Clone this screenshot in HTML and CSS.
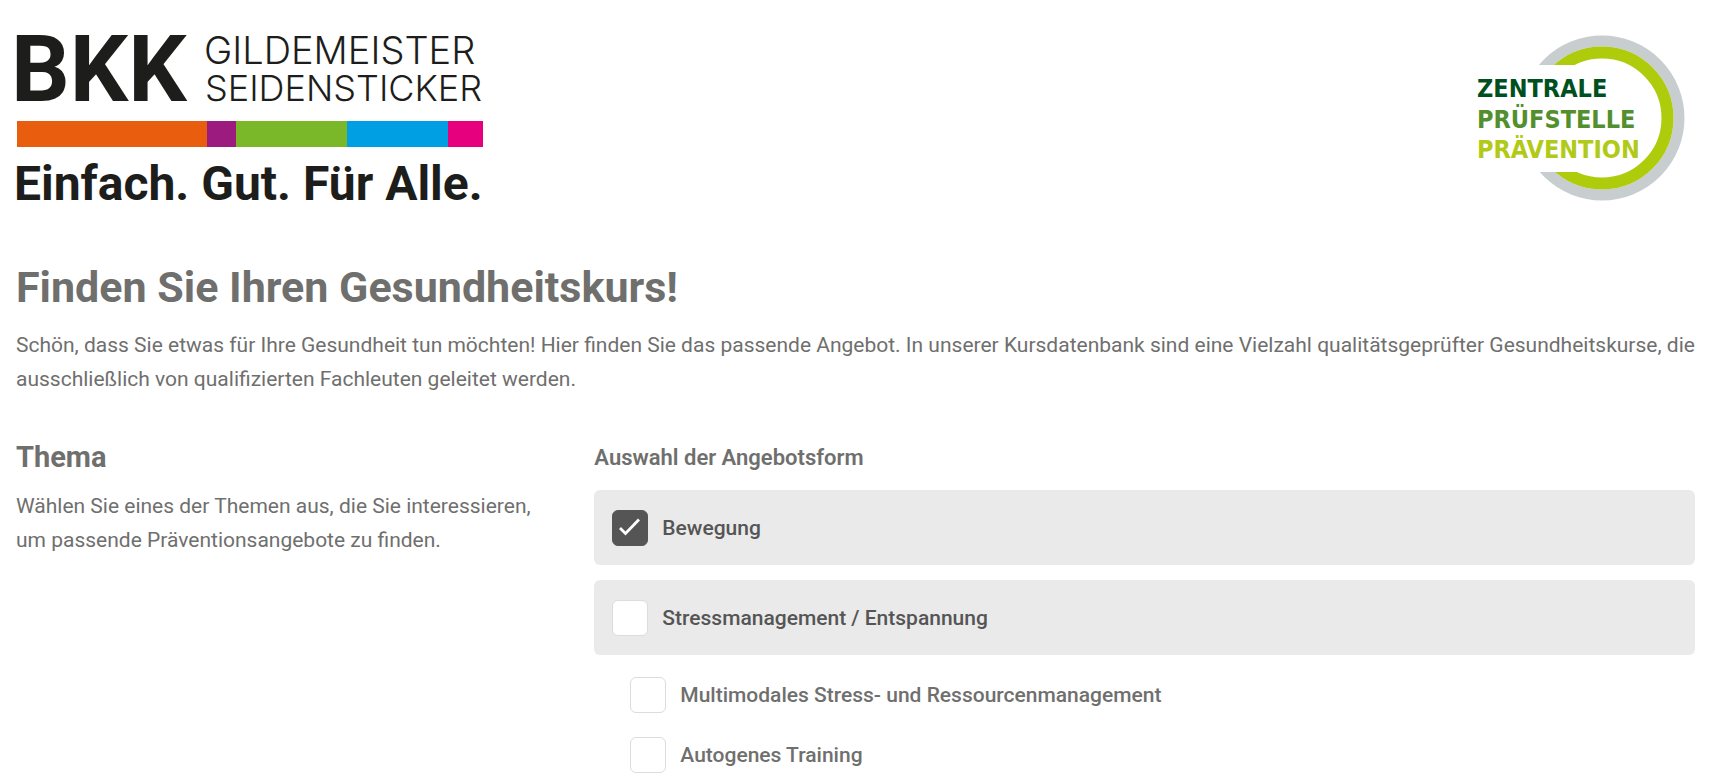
FILE: index.html
```html
<!DOCTYPE html>
<html lang="de">
<head>
<meta charset="utf-8">
<meta name="viewport" content="width=device-width, initial-scale=1">
<title>Finden Sie Ihren Gesundheitskurs!</title>
<link rel="stylesheet" href="styles.css">
</head>
<body>
<div class="page">
  <header class="header">
    <svg class="logo-bkk" width="480" height="192" viewBox="0 -12 480 192" role="img" aria-label="BKK Gildemeister Seidensticker">
      <g fill="#1d1d1b">
        <text class="bkk-name" x="-5" y="77">BKK</text>
        <text class="bkk-sub" font-size="38" x="188" y="40">GILDEMEISTER</text>
        <text class="bkk-sub" font-size="36" x="189" y="77">SEIDENSTICKER</text>
        <text class="bkk-claim" x="-2" y="176">Einfach. Gut. Für Alle.</text>
      </g>
      <path fill="#e95d0f" d="M1 97h190v26H1z"/>
      <path fill="#9b1b7e" d="M191 97h29v26h-29z"/>
      <path fill="#7ab829" d="M220 97h111v26H220z"/>
      <path fill="#009fe3" d="M331 97h101v26H331z"/>
      <path fill="#e6007e" d="M432 97h35v26h-35z"/>
    </svg>
    <svg class="logo-zpp" width="208" height="166" viewBox="0 0 208 166" role="img" aria-label="Zentrale Prüfstelle Prävention">
      <circle cx="125" cy="83" r="77" fill="none" stroke="#c8cdcf" stroke-width="11"/>
      <circle cx="125" cy="83" r="65.500" fill="none" stroke="#aecb0c" stroke-width="12"/>
      <path fill="#fff" d="M0 30h125v107H0z"/>
      <text x="0" y="62" fill="#00501f">ZENTRALE</text>
      <text x="0" y="93" fill="#538f2c">PRÜFSTELLE</text>
      <text x="0" y="123" fill="#b1ca17">PRÄVENTION</text>
    </svg>
  </header>
  <main>
    <h1>Finden Sie Ihren Gesundheitskurs!</h1>
    <p>Schön, dass Sie etwas für Ihre Gesundheit tun möchten! Hier finden Sie das passende Angebot. In unserer Kursdatenbank sind eine Vielzahl qualitätsgeprüfter Gesundheitskurse, die ausschließlich von qualifizierten Fachleuten geleitet werden.</p>
    <div class="section">
      <div class="intro">
        <h2>Thema</h2>
        <p>Wählen Sie eines der Themen aus, die Sie interessieren, um passende Präventionsangebote zu finden.</p>
      </div>
      <fieldset class="topics">
        <legend>Auswahl der Angebotsform</legend>
        <label class="topic"><input type="checkbox" checked>Bewegung</label>
        <label class="topic"><input type="checkbox">Stressmanagement / Entspannung</label>
        <div class="subtopics">
          <label><input type="checkbox">Multimodales Stress- und Ressourcenmanagement</label>
          <label><input type="checkbox">Autogenes Training</label>
        </div>
      </fieldset>
    </div>
  </main>
</div>
</body>
</html>
```
FILE: styles.css
```css
* {
  box-sizing: border-box;
}

body {
  margin: 0;
  background: #fff;
  color: #6f6f6e;
  font: 21px/34px Roboto, "Liberation Sans", sans-serif;
}

.page {
  padding: 12px 31px 0 16px;
}

.header {
  display: flex;
  justify-content: space-between;
  align-items: flex-start;
}

.logo-bkk,
.logo-zpp {
  display: block;
  overflow: visible;
}

.logo-zpp {
  margin: 23px 10px 0 0;
  font: bold 25px "DejaVu Sans Condensed", "DejaVu Sans", sans-serif;
}

.bkk-name {
  font-size: 92px;
  font-weight: 700;
}

.bkk-sub {
  font-family: Inter, Roboto, sans-serif;
  font-weight: 300;
}

.bkk-claim {
  font-size: 48px;
  font-weight: 700;
}

h1,
h2,
p {
  margin: 0;
}

h1 {
  margin: 55px 0 13px;
  font-size: 43px;
  line-height: 56px;
}

h2 {
  margin-bottom: 15px;
  font-size: 29px;
}

.section {
  display: grid;
  grid-template-columns: 1fr 2fr;
  gap: 28px;
  margin-top: 44px;
}

.intro {
  padding-right: 16px;
}

.topics {
  min-width: 0;
  margin: 0;
  padding: 0;
  border: 0;
}

legend {
  margin-bottom: 14px;
  padding: 0;
  font-size: 22px;
  font-weight: 600;
  line-height: 36px;
}

label {
  display: flex;
  align-items: center;
  gap: 14px;
  font-weight: 500;
}

.topic {
  min-height: 75px;
  margin-bottom: 15px;
  padding: 0 18px;
  border-radius: 6px;
  background: #eaeaea;
  color: #555;
}

.subtopics {
  display: grid;
  gap: 24px;
  padding: 7px 36px;
}

input {
  flex: none;
  width: 36px;
  height: 36px;
  margin: 0;
  border: 1px solid #dcdcdc;
  border-radius: 6px;
  background: #fff;
  appearance: none;
}

input:checked {
  border-color: #555;
  background: #555 url("data:image/svg+xml,%3Csvg xmlns='http://www.w3.org/2000/svg' viewBox='0 0 34 34'%3E%3Cpath d='M7 17l5.500 5.500L26 8.500' fill='none' stroke='%23fff' stroke-width='2.800'/%3E%3C/svg%3E") center / 34px 34px no-repeat;
}
```
